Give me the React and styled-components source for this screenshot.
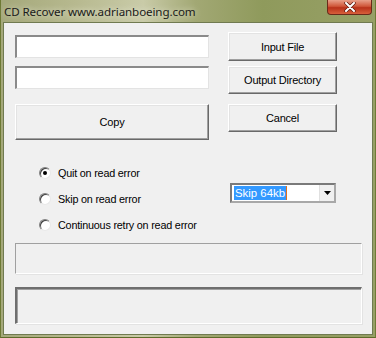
import React from 'react';
import styled, { createGlobalStyle } from 'styled-components';

const GlobalStyle = createGlobalStyle`
  html, body {
    margin: 0;
    padding: 0;
    background: #8e9660;
  }
  body {
    font-family: "Liberation Sans", Arial, sans-serif;
  }
`;

const Window = styled.div`
  width: 376px;
  height: 338px;
  display: flex;
  flex-direction: column;
  box-sizing: border-box;
  background: linear-gradient(90deg, #a4a87a 0%, #b7b98f 20%, #c9cba8 38%, #a2a874 52%, #8f9a5c 70%, #97a066 100%);
  border-left: 1px solid #6e7a34;
  border-right: 1px solid #6e7a34;
  border-bottom: 1px solid #5f6b2a;
  position: relative;
`;

const TitleBar = styled.div`
  height: 22px;
  display: flex;
  align-items: center;
  padding-left: 3px;
  font-family: "Noto Sans", "Open Sans", sans-serif;
  font-size: 11.6px;
  color: #1a1a1a;
  text-shadow: 0 0 6px rgba(255, 255, 240, 0.8);
  letter-spacing: -0.1px;
`;

const CloseButton = styled.div`
  position: absolute;
  top: 0;
  right: 3px;
  width: 45px;
  height: 15px;
  box-sizing: border-box;
  border: 1px solid #6a2a1a;
  border-top: none;
  border-radius: 0 0 4px 4px;
  background: linear-gradient(180deg, #e8a08a 0%, #d0573a 45%, #b8321a 55%, #d8603c 100%);
  display: flex;
  align-items: center;
  justify-content: center;
`;

const Client = styled.div`
  flex: 1;
  margin: 0 2px 2px 2px;
  background: #f0f0f0;
  border: 1px solid #707a50;
  box-sizing: border-box;
  padding: 9px 11px 0 11px;
  display: flex;
  flex-direction: column;
  font-size: 10.6px;
  color: #000;
`;

const TopGrid = styled.div`
  display: grid;
  grid-template-columns: 194px 109px;
  column-gap: 19px;
`;

const Column = styled.div`
  display: flex;
  flex-direction: column;
  padding-top: ${(p) => p.$top || 0}px;
`;

const Edit = styled.div`
  height: 23px;
  box-sizing: border-box;
  background: #fff;
  border-top: 2px solid #8a8a8a;
  border-left: 2px solid #8a8a8a;
  border-right: 1px solid #e3e3e3;
  border-bottom: 1px solid #e3e3e3;
  margin-bottom: ${(p) => p.$gap || 0}px;
`;

const Button = styled.div`
  height: ${(p) => p.$h}px;
  margin-bottom: ${(p) => p.$gap || 0}px;
  box-sizing: border-box;
  background: #f0f0f0;
  border-top: 1px solid #fff;
  border-left: 1px solid #fff;
  border-right: 1px solid #696969;
  border-bottom: 1px solid #696969;
  box-shadow: inset -1px -1px 0 #a0a0a0, inset 1px 1px 0 #e3e3e3;
  display: flex;
  align-items: center;
  justify-content: center;
  font-size: 11px;
  letter-spacing: -0.2px;
`;

const OptionsRow = styled.div`
  display: grid;
  grid-template-columns: 191px 106px;
  padding-left: 24px;
  margin-top: 26px;
`;

const RadioList = styled.div`
  display: flex;
  flex-direction: column;
  gap: 12px;
`;

const RadioItem = styled.label`
  display: flex;
  align-items: center;
  gap: 7px;
  height: 14px;
  font-size: 10.8px;
  letter-spacing: -0.2px;
`;

const RadioCircle = styled.span`
  width: 12px;
  height: 12px;
  box-sizing: border-box;
  border-radius: 50%;
  background: #fff;
  border: 1px solid;
  border-color: #808080 #e8e8e8 #e8e8e8 #808080;
  box-shadow: inset 1px 1px 0 #404040;
  display: flex;
  align-items: center;
  justify-content: center;
  &::after {
    content: '';
    width: 4px;
    height: 4px;
    border-radius: 50%;
    background: ${(p) => (p.$checked ? '#000' : 'transparent')};
  }
`;

const Combo = styled.div`
  margin-top: 17px;
  height: 20px;
  box-sizing: border-box;
  background: #fff;
  border: 2px solid #7a7a7a;
  border-right-color: #a8a8a8;
  border-bottom-color: #a8a8a8;
  display: flex;
  align-items: center;
  padding-left: 2px;
`;

const ComboText = styled.span`
  background: #3399ff;
  color: #fff;
  font-size: 11.4px;
  padding: 0 1px;
  line-height: 14px;
  border-right: 1px solid #e07020;
`;

const ComboArrow = styled.span`
  margin-left: auto;
  width: 15px;
  height: 16px;
  box-sizing: border-box;
  background: #f0f0f0;
  border-left: 1px solid #e0e0e0;
  display: flex;
  align-items: center;
  justify-content: center;
`;

const StatusBox = styled.div`
  height: ${(p) => p.$h}px;
  box-sizing: border-box;
  margin-top: ${(p) => p.$top}px;
  width: 347px;
  border-top: ${(p) => (p.$deep ? '2px solid #6e6e6e' : '1px solid #a0a0a0')};
  border-left: ${(p) => (p.$deep ? '2px solid #6e6e6e' : '1px solid #a0a0a0')};
  border-right: 1px solid #fff;
  border-bottom: 1px solid #fff;
  box-shadow: ${(p) => (p.$deep ? 'inset 1px 1px 0 #a0a0a0, 1px 1px 0 #e3e3e3' : '1px 1px 0 #e3e3e3')};
`;

export default function App() {
  return (
    <>
      <GlobalStyle />
      <Window>
        <TitleBar>CD Recover www.adrianboeing.com</TitleBar>
        <CloseButton>
          <svg width="12" height="10" viewBox="0 0 12 10">
            <path d="M2 1 L10 9 M10 1 L2 9" stroke="#5a1a10" strokeWidth="3.4" strokeLinecap="round" />
            <path d="M2 1 L10 9 M10 1 L2 9" stroke="#fff" strokeWidth="2" strokeLinecap="round" />
          </svg>
        </CloseButton>
        <Client>
          <TopGrid>
            <Column $top={3}>
              <Edit $gap={8} />
              <Edit $gap={15} />
              <Button $h={36}>Copy</Button>
            </Column>
            <Column>
              <Button $h={29} $gap={5}>Input File</Button>
              <Button $h={28} $gap={10}>Output Directory</Button>
              <Button $h={28}>Cancel</Button>
            </Column>
          </TopGrid>
          <OptionsRow>
            <RadioList>
              <RadioItem><RadioCircle $checked />Quit on read error</RadioItem>
              <RadioItem><RadioCircle />Skip on read error</RadioItem>
              <RadioItem><RadioCircle />Continuous retry on read error</RadioItem>
            </RadioList>
            <Combo>
              <ComboText>Skip 64kb</ComboText>
              <ComboArrow>
                <svg width="7" height="4" viewBox="0 0 7 4">
                  <path d="M0 0 H7 L3.5 4 Z" fill="#000" />
                </svg>
              </ComboArrow>
            </Combo>
          </OptionsRow>
          <StatusBox $h={31} $top={11} />
          <StatusBox $h={37} $top={13} $deep />
        </Client>
      </Window>
    </>
  );
}
